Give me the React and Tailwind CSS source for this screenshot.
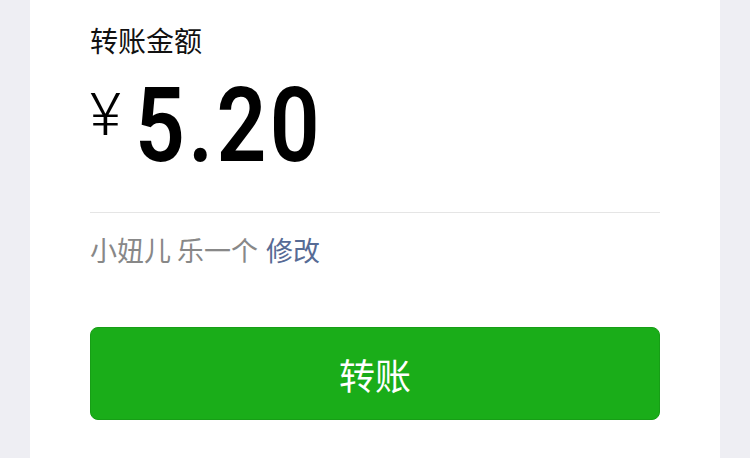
import React from 'react';

const cjk = { fontFamily: '"Noto Sans CJK SC", "Noto Sans", sans-serif' };

const App = () => {
    return (
        <div className="min-h-[458px] w-[750px] bg-[#eeeef3] px-[30px]" style={cjk}>
            <div className="min-h-[458px] bg-white px-[60px] pt-[26px] pb-[40px]">
                {/* Title */}
                <div className="text-[28px] leading-[28px] text-[#111]">转账金额</div>

                {/* Amount */}
                <div className="mt-[20px] flex items-start">
                    <span className="mt-[11px] font-['Roboto',sans-serif] text-[60px] font-light leading-none text-black">¥</span>
                    <span className="ml-[14px] origin-left scale-x-[0.84] font-['Roboto',sans-serif] text-[104px] font-semibold leading-none tracking-[4px] text-black">5.20</span>
                </div>

                {/* Divider */}
                <div className="mt-[34px] h-px bg-[#e5e5e5]" />

                {/* Note */}
                <div className="mt-[23px] text-[27px] leading-[27px] text-[#888888]">
                    小妞儿 乐一个<span className="ml-[8px] text-[#576b95]">修改</span>
                </div>

                {/* Button */}
                <button className="mt-[64px] flex h-[93px] w-full items-center justify-center rounded-[8px] border border-[#179e16] bg-[#1aad19] text-[36px] text-white">
                    转账
                </button>
            </div>
        </div>
    );
};

export default App;
